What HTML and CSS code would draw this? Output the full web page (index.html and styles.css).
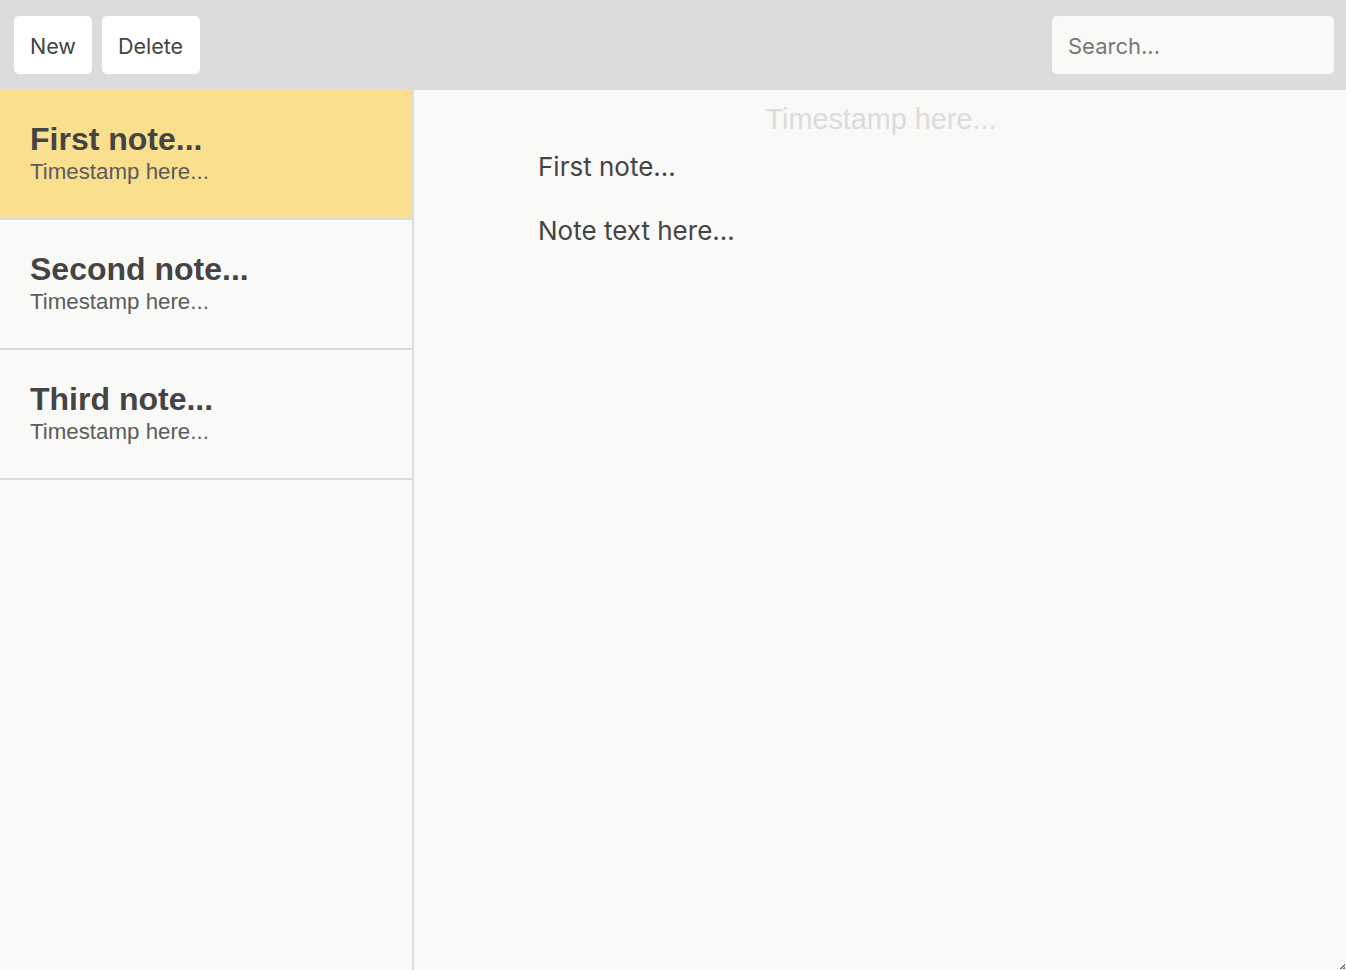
FILE: index.html
```html
<!DOCTYPE html>
<html>
<head>
<meta charset="utf-8">
<link rel="stylesheet" href="styles.css">
</head>
<body>
<header class="toolbar">
  <div class="actions">
    <button class="btn">New</button>
    <button class="btn">Delete</button>
  </div>
  <input class="search" type="text" placeholder="Search...">
</header>
<div class="app">
  <aside class="sidebar">
    <div class="note active">
      <div class="note-title">First note...</div>
      <div class="note-time">Timestamp here...</div>
    </div>
    <div class="note">
      <div class="note-title">Second note...</div>
      <div class="note-time">Timestamp here...</div>
    </div>
    <div class="note">
      <div class="note-title">Third note...</div>
      <div class="note-time">Timestamp here...</div>
    </div>
  </aside>
  <main class="editor">
    <div class="editor-time">Timestamp here...</div>
    <div class="editor-body">
      <p class="editor-title">First note...</p>
      <p class="editor-text">Note text here...</p>
    </div>
    <div class="resize"></div>
  </main>
</div>
</body>
</html>
```
FILE: styles.css
```css
* { box-sizing: border-box; }
html, body { margin: 0; height: 100%; }
body {
  background: #f9f9f8;
  font-family: "Liberation Sans", Arial, sans-serif;
  color: #444;
  display: flex;
  flex-direction: column;
  height: 970px;
  overflow: hidden;
}
.toolbar {
  height: 90px;
  flex: none;
  background: #dddbde;
  display: flex;
  align-items: flex-start;
  justify-content: space-between;
  padding: 16px 12px 0 14px;
}
.actions { display: flex; gap: 10px; }
.btn {
  height: 58px;
  border: none;
  border-radius: 5px;
  background: #fff;
  font-family: "Inter", "Open Sans", sans-serif;
  font-size: 21.5px;
  color: #444;
  padding: 1px 16px 0;
}
.btn + .btn { padding: 1px 17px 0 16px; }
.search {
  width: 282px;
  height: 58px;
  border: none;
  border-radius: 5px;
  background: #f9f9f8;
  font-family: "Inter", "Open Sans", sans-serif;
  font-size: 22px;
  padding: 1px 16px 0;
  color: #444;
  outline: none;
}
.search::placeholder { color: #777; }
.app { flex: 1; display: flex; min-height: 0; }
.sidebar {
  width: 414px;
  flex: none;
  border-right: 2px solid #dcdcdc;
}
.note {
  height: 130px;
  border-bottom: 2px solid #dcdcdc;
  padding: 31px 30px 0;
}
.note.active { background: #fadf8f; }
.note-title {
  font-weight: bold;
  font-size: 32px;
  line-height: 36px;
  color: #444;
}
.note-time {
  font-size: 22.3px;
  line-height: 30px;
  color: #5c5c5c;
}
.editor {
  flex: 1;
  position: relative;
  padding-top: 11px;
}
.editor-time {
  text-align: center;
  font-size: 28.8px;
  line-height: 36px;
  color: #dddbde;
  padding-left: 2px;
}
.editor-body {
  padding-left: 124px;
  font-family: "Inter", "Open Sans", sans-serif;
  font-size: 26px;
  color: #444;
}
.editor-body p { margin: 0; line-height: 32px; }
.editor-title { margin-top: 14px !important; }
.editor-text { margin-top: 32px !important; }
.resize {
  position: absolute;
  right: 1px;
  bottom: 1px;
  width: 5px;
  height: 5px;
  background: linear-gradient(135deg, transparent 45%, #777 45%, #777 60%, transparent 60%, transparent 75%, #777 75%);
}
```
